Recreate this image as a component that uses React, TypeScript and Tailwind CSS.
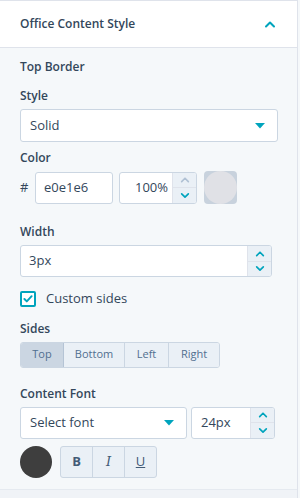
import React from 'react';

const font = { fontFamily: '"Open Sans", "Noto Sans", sans-serif' };

function Chevron({ up, className }: { up?: boolean; className?: string }) {
  return (
    <svg viewBox="0 0 12 8" className={className} fill="none" stroke="currentColor" strokeWidth="2" strokeLinecap="round" strokeLinejoin="round">
      {up ? <path d="M2 6.5 6 2.5l4 4" /> : <path d="M2 2l4 4 4-4" />}
    </svg>
  );
}

function Caret() {
  return (
    <svg viewBox="0 0 10 6" className="w-[10px] h-[6px] text-[#00a4bd]" fill="currentColor">
      <path d="M0 0h10L5 5.5z" />
    </svg>
  );
}

function Stepper({ upDisabled }: { upDisabled?: boolean }) {
  return (
    <div className="flex flex-col w-6 shrink-0 bg-[#eaf0f6] border-l border-[#dfe3eb]">
      <div className="flex-1 flex items-center justify-center border-b border-[#dfe3eb]">
        <Chevron up className={`w-[10px] h-[7px] ${upDisabled ? 'text-[#b0c1d4]' : 'text-[#00a4bd]'}`} />
      </div>
      <div className="flex-1 flex items-center justify-center">
        <Chevron className="w-[10px] h-[7px] text-[#00a4bd]" />
      </div>
    </div>
  );
}

function Label({ children, className = '' }: { children: React.ReactNode; className?: string }) {
  return <div className={`text-[12px] font-semibold text-[#33475b] leading-none ${className}`}>{children}</div>;
}

export default function App() {
  return (
    <div className="w-[300px] h-[498px] bg-[#f5f8fa] text-[#33475b] overflow-hidden" style={font}>
      <div className="w-[298px] h-full border-r border-[#dfe3eb] border-t flex flex-col">
        <div className="h-[47px] bg-white border-b border-[#dfe3eb] flex items-center justify-between pl-5 pr-[21px] shrink-0">
          <span className="text-[12px] font-semibold">Office Content Style</span>
          <Chevron up className="w-[12px] h-[8px] text-[#00a4bd]" />
        </div>

        <div className="px-5 flex-1 flex flex-col">
          <Label className="mt-[13px]">Top Border</Label>
          <Label className="mt-[17px]">Style</Label>
          <div className="mt-[7px] w-[258px] h-[33px] bg-white border border-[#cbd6e2] rounded-[3px] flex items-center justify-between pl-[9px] pr-[12px]">
            <span className="text-[13px]">Solid</span>
            <Caret />
          </div>

          <Label className="mt-[10px]">Color</Label>
          <div className="mt-[7px] flex items-center gap-[6px]">
            <span className="text-[13px] w-[9px]">#</span>
            <div className="w-[78px] h-[32px] bg-white border border-[#cbd6e2] rounded-[3px] flex items-center pl-[8px] text-[13px]">e0e1e6</div>
            <div className="w-[78px] h-[32px] bg-white border border-[#cbd6e2] rounded-[3px] flex overflow-hidden">
              <div className="flex-1 flex items-center justify-end pr-[4px] text-[13px]">100%</div>
              <Stepper upDisabled />
            </div>
            <div className="relative w-[33px] h-[33px] ml-[1px]">
              <div className="absolute inset-0 rounded-[4px] bg-[#c8d2dd]" />
              <div className="absolute inset-0 rounded-full bg-[#e0e1e6]" />
            </div>
          </div>

          <Label className="mt-[22px]">Width</Label>
          <div className="mt-[7px] w-[252px] h-[32px] bg-white border border-[#cbd6e2] rounded-[3px] flex overflow-hidden">
            <div className="flex-1 flex items-center pl-[8px] text-[13px]">3px</div>
            <Stepper />
          </div>

          <div className="mt-[12px] flex items-center gap-[10px]">
            <div className="w-[16px] h-[16px] border-2 border-[#00a4bd] rounded-[2px] bg-white flex items-center justify-center">
              <svg viewBox="0 0 12 10" className="w-[10px] h-[8px]" fill="none" stroke="#00a4bd" strokeWidth="2.4" strokeLinecap="round" strokeLinejoin="round">
                <path d="M1.5 5 4.5 8 10.5 1.5" />
              </svg>
            </div>
            <span className="text-[13px]">Custom sides</span>
          </div>

          <Label className="mt-[14px]">Sides</Label>
          <div className="mt-[7px] flex w-[200px] h-[26px] border border-[#cbd6e2] rounded-[3px] overflow-hidden text-[11px] text-[#516f90]">
            <div className="w-[43px] flex items-center justify-center bg-[#cbd6e2] border-r border-[#b5c4d5]">Top</div>
            <div className="w-[61px] flex items-center justify-center bg-[#eaf0f6] border-r border-[#cbd6e2]">Bottom</div>
            <div className="w-[44px] flex items-center justify-center bg-[#eaf0f6] border-r border-[#cbd6e2]">Left</div>
            <div className="flex-1 flex items-center justify-center bg-[#eaf0f6]">Right</div>
          </div>

          <Label className="mt-[20px]">Content Font</Label>
          <div className="mt-[7px] flex gap-[4px]">
            <div className="w-[167px] h-[32px] bg-white border border-[#cbd6e2] rounded-[3px] flex items-center justify-between pl-[9px] pr-[12px]">
              <span className="text-[13px]">Select font</span>
              <Caret />
            </div>
            <div className="w-[84px] h-[32px] bg-white border border-[#cbd6e2] rounded-[3px] flex overflow-hidden">
              <div className="flex-1 flex items-center pl-[9px] text-[13px]">24px</div>
              <Stepper />
            </div>
          </div>

          <div className="mt-[7px] flex items-center gap-[8px]">
            <div className="w-[32px] h-[32px] rounded-full bg-[#3e3e3e]" />
            <div className="flex h-[32px] border border-[#cbd6e2] rounded-[3px] overflow-hidden bg-[#eaf0f6] text-[#425b76] text-[13px]">
              <div className="w-[32px] flex items-center justify-center font-bold border-r border-[#cbd6e2]">B</div>
              <div className="w-[32px] flex items-center justify-center italic border-r border-[#cbd6e2]" style={{ fontFamily: '"DejaVu Serif", serif' }}>I</div>
              <div className="w-[31px] flex items-center justify-center underline">U</div>
            </div>
          </div>
        </div>

        <div className="h-[9px] border-t border-[#e5eaf0] bg-[#f0f3f7] shrink-0" />
      </div>
    </div>
  );
}
